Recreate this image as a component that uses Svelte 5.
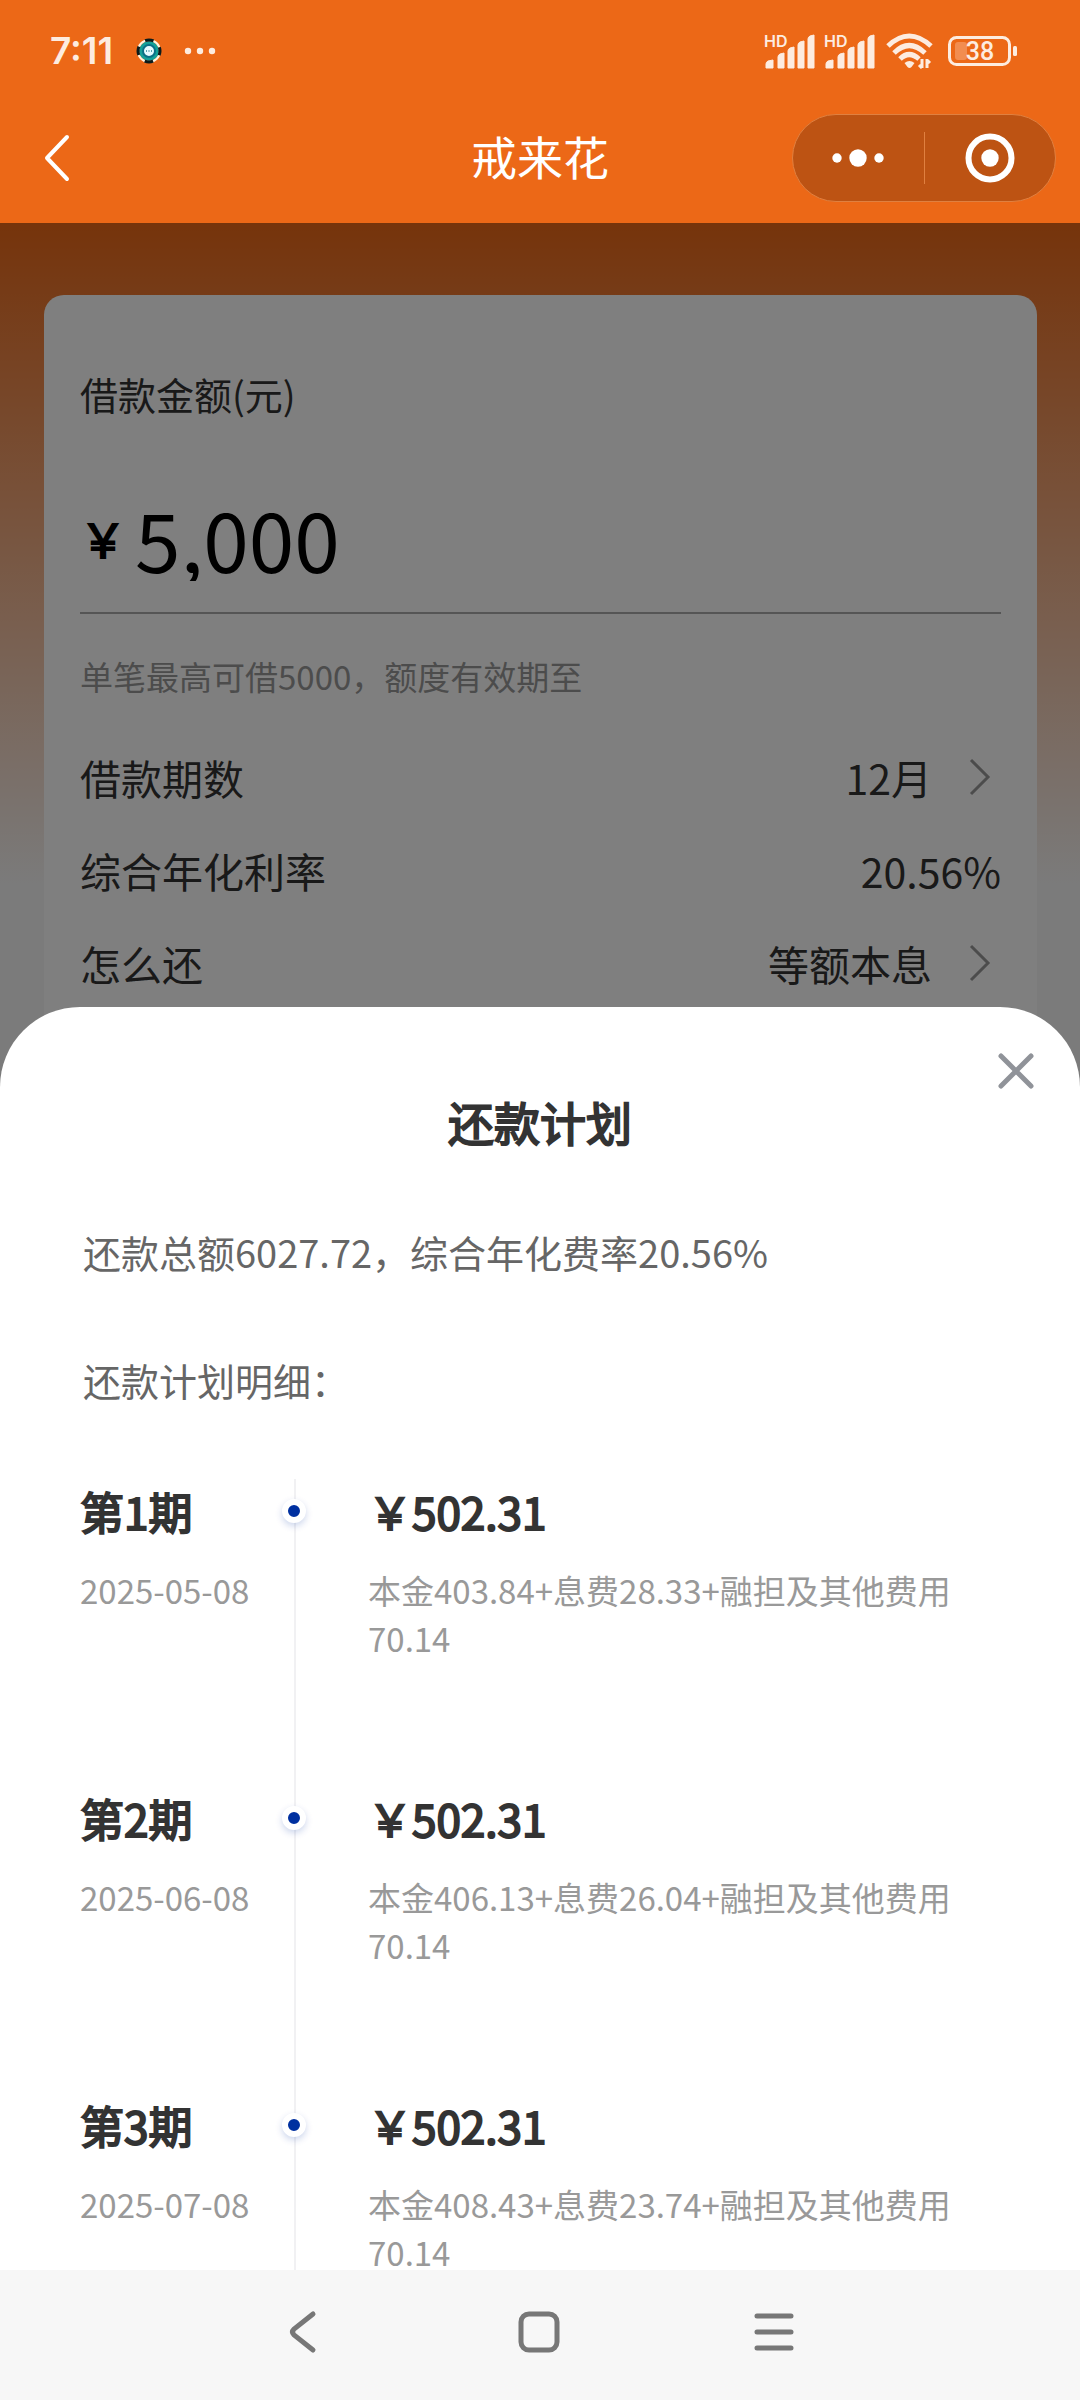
<script>
    let amount = '5,000';

    const loanRows = [
        { label: '借款期数', value: '12月', link: true },
        { label: '综合年化利率', value: '20.56%', link: false },
        { label: '怎么还', value: '等额本息', link: true }
    ];

    const plan = [
        { term: 1, date: '2025-05-08', total: '502.31', principal: '403.84', interest: '28.33', fee: '70.14' },
        { term: 2, date: '2025-06-08', total: '502.31', principal: '406.13', interest: '26.04', fee: '70.14' },
        { term: 3, date: '2025-07-08', total: '502.31', principal: '408.43', interest: '23.74', fee: '70.14' }
    ];

    let showPlan = true;
</script>

<div class="screen">
    <header>
        <div class="status">
            <span class="time">7:11</span>
            <svg class="notice" width="82" height="26" viewBox="0 0 82 26">
                <circle cx="13" cy="13" r="10" fill="#14a098" />
                <circle cx="13" cy="13" r="11" fill="none" stroke="#fff3e0" stroke-width="2" />
                <circle cx="13" cy="13" r="11" fill="none" stroke="#0b1a1a" stroke-width="3" stroke-dasharray="8.6 8.68" stroke-dashoffset="4.3" />
                <circle cx="13" cy="13" r="6" fill="#e6fbff" stroke="#0b6f86" stroke-width="2" />
                <path d="M10 13h1M12.5 13h1M15 13h1" stroke="#2b8793" stroke-width="1.5" />
                <g fill="#fdece0">
                    <circle cx="52" cy="13" r="3.2" />
                    <circle cx="64" cy="13" r="3.2" />
                    <circle cx="76" cy="13" r="3.2" />
                </g>
            </svg>
            <div class="signals">
                {#each [1, 2] as sim}
                    <svg width="52" height="42" viewBox="0 -3 52 42">
                        <text x="0" y="14" class="hd">HD</text>
                        <path d="M2 35v-4q0-2 2-3l5-1v8zM14 35V24q0-2 2-3l4-1v15zM24 35V18q0-2 2-3l4-1v21zM34 35V12q0-2 2-3l4-1v27zM44 35V6q0-2 2-3l4-1v33z" fill="#fdece0" stroke="#fdece0" stroke-width="1" stroke-linejoin="round" />
                    </svg>
                {/each}
                <svg class="wifi" width="48" height="36" viewBox="0 0 48 36">
                    <g fill="none" stroke="#fdece0" stroke-width="5">
                        <path d="M2 13Q23-7 45 13" />
                        <path d="M8 20Q23 5 39 20" />
                        <path d="M14 26Q23 17 33 26" />
                    </g>
                    <path d="M18.5 30q5-4 10 0l-3 4q-2 2-4 0z" fill="#fdece0" />
                    <path d="M36 26v9M36 35l-3-3M41 35v-9M41 27l3 3" fill="none" stroke="#fdece0" stroke-width="3" />
                </svg>
                <svg width="70" height="32" viewBox="0 0 70 32">
                    <rect x="1.5" y="2.5" width="60" height="27" rx="7" fill="none" stroke="#fdece0" stroke-width="3" />
                    <rect x="7" y="7" width="12" height="18" rx="3" fill="#f28d50" />
                    <rect x="65" y="11" width="4" height="10" rx="1.5" fill="#fdece0" />
                    <text x="32" y="25" class="level">38</text>
                </svg>
            </div>
        </div>

        <nav class="titlebar">
            <button class="back" aria-label="返回">
                <svg width="26" height="48" viewBox="0 0 26 48">
                    <path d="M23 3L3 24l20 21" fill="none" stroke="#fff" stroke-width="4" stroke-linecap="round" stroke-linejoin="round" />
                </svg>
            </button>
            <h1>戒来花</h1>
            <div class="capsule">
                <button aria-label="更多">
                    <svg width="52" height="20" viewBox="0 0 52 20" fill="#fff">
                        <circle cx="5" cy="10" r="4.7" />
                        <circle cx="26" cy="10" r="8.7" />
                        <circle cx="47" cy="10" r="4.7" />
                    </svg>
                </button>
                <i></i>
                <button aria-label="关闭小程序">
                    <svg width="50" height="50" viewBox="0 0 50 50">
                        <circle cx="25" cy="25" r="21.5" fill="none" stroke="#fff" stroke-width="6" />
                        <circle cx="25" cy="25" r="8.7" fill="#fff" />
                    </svg>
                </button>
            </div>
        </nav>
    </header>

    <main>
        <section class="card">
            <label class="amount-label" for="amount">借款金额(元)</label>
            <div class="amount">
                <span>￥</span>
                <input id="amount" type="text" bind:value={amount} />
            </div>
            <p class="hint">单笔最高可借5000，额度有效期至</p>
            {#each loanRows as row}
                <div class="row">
                    <span>{row.label}</span>
                    {#if row.link}
                        <button>
                            {row.value}
                            <svg width="22" height="38" viewBox="0 0 22 38">
                                <path d="M2 2l17 17L2 36" fill="none" stroke="#999" stroke-width="3" />
                            </svg>
                        </button>
                    {:else}
                        <span>{row.value}</span>
                    {/if}
                </div>
            {/each}
        </section>

        {#if showPlan}
            <div class="mask"></div>
            <section class="sheet" role="dialog" aria-labelledby="plan-title">
                <button class="close" aria-label="关闭" on:click={() => (showPlan = false)}>
                    <svg width="38" height="38" viewBox="0 0 38 38">
                        <path d="M4 4l30 30M34 4L4 34" stroke="#909399" stroke-width="5" stroke-linecap="round" />
                    </svg>
                </button>
                <h2 id="plan-title">还款计划</h2>
                <p class="summary">还款总额6027.72，综合年化费率20.56%</p>
                <p class="summary">还款计划明细：</p>
                <ol>
                    {#each plan as item}
                        <li>
                            <div class="term">
                                <h3>第{item.term}期</h3>
                                <time datetime={item.date}>{item.date}</time>
                            </div>
                            <div class="detail">
                                <span class="dot"></span>
                                <h3>￥{item.total}</h3>
                                <p>本金{item.principal}+息费{item.interest}+融担及其他费用{item.fee}</p>
                            </div>
                        </li>
                    {/each}
                </ol>
            </section>
        {/if}
    </main>

    <footer>
        <button aria-label="后退">
            <svg width="44" height="44" viewBox="0 0 44 44">
                <path d="M31 4L12 19q-3 3 0 6l19 15" />
            </svg>
        </button>
        <button aria-label="主屏幕">
            <svg width="44" height="44" viewBox="0 0 44 44">
                <rect x="4" y="4" width="36" height="36" rx="8" />
            </svg>
        </button>
        <button aria-label="最近任务">
            <svg width="44" height="44" viewBox="0 0 44 44">
                <path d="M5 6h34M5 22h34M5 38h34" />
            </svg>
        </button>
    </footer>
</div>

<style>
    :global(body) {
        font-family: "Noto Sans CJK SC", "Noto Sans", sans-serif;
    }

    h1, h2, h3, p, ol {
        margin: 0;
        padding: 0;
        list-style: none;
    }

    button {
        padding: 0;
        border: 0;
        background: none;
        font: inherit;
        color: inherit;
    }

    svg {
        display: block;
    }

    .screen {
        display: flex;
        flex-direction: column;
        height: 100vh;
        overflow: hidden;
    }

    header {
        background: #ec6817;
        color: #fff;
    }

    .status {
        display: flex;
        align-items: center;
        height: 102px;
        padding: 0 62px 0 50px;
    }

    .time {
        font: 600 37px/48px Inter, sans-serif;
        color: #fdece0;
    }

    .notice {
        margin-left: 23px;
    }

    .signals {
        display: flex;
        align-items: center;
        gap: 8px;
        margin-left: auto;
    }

    .hd {
        font: 600 16px Inter, sans-serif;
        fill: #fdece0;
    }

    .level {
        font: 500 25px Roboto, sans-serif;
        fill: #fdece0;
        text-anchor: middle;
    }

    .wifi {
        margin: 0 6px 0 2px;
    }

    .titlebar {
        display: grid;
        grid-template-columns: 1fr auto 1fr;
        align-items: center;
        height: 112px;
        padding: 0 24px 9px;
    }

    .titlebar h1 {
        font-size: 46px;
        font-weight: 400;
        line-height: 66px;
        padding-bottom: 6px;
    }

    .back {
        justify-self: start;
        margin-left: 20px;
    }

    .capsule {
        display: flex;
        align-items: center;
        justify-self: end;
        box-sizing: border-box;
        width: 264px;
        height: 88px;
        border: 1px solid #e08040;
        border-radius: 44px;
        background: #bd5313;
    }

    .capsule button {
        display: flex;
        flex: 1;
        justify-content: center;
    }

    .capsule i {
        width: 1px;
        height: 52px;
        background: #e08040;
    }

    main {
        position: relative;
        flex: 1;
        min-height: 0;
        overflow: hidden;
        box-sizing: border-box;
        padding: 72px 43px 0 44px;
        background: #f6f6f6 linear-gradient(#ec6817, #f6f6f6) no-repeat 0 0 / 100% 660px;
    }

    .card {
        padding: 71px 36px;
        border-radius: 20px;
        background: #fff;
        color: #333;
    }

    .amount-label {
        display: block;
        font-size: 38px;
        line-height: 56px;
    }

    .amount {
        display: flex;
        align-items: center;
        margin-top: 71px;
        padding-bottom: 31px;
        border-bottom: 2px solid #aaa;
        color: #000;
    }

    .amount span {
        font-size: 46px;
        line-height: 66px;
        -webkit-text-stroke: 2px;
    }

    .amount input {
        flex: 1;
        min-width: 0;
        height: 88px;
        margin-left: 9px;
        padding: 0;
        border: 0;
        background: none;
        font: inherit;
        font-size: 82px;
        color: inherit;
    }

    .hint {
        margin: 38px 0 30px;
        font-size: 33px;
        line-height: 48px;
        color: #999;
    }

    .row {
        display: flex;
        align-items: center;
        justify-content: space-between;
        height: 93px;
        font-size: 41px;
    }

    .row button {
        display: flex;
        align-items: center;
        gap: 37px;
        padding-right: 10px;
    }

    .mask {
        position: absolute;
        inset: 0;
        background: rgba(0, 0, 0, 0.5);
    }

    .sheet {
        position: absolute;
        inset: 784px 0 0;
        overflow: hidden;
        padding: 81px 80px 0;
        border-radius: 80px 80px 0 0;
        background: #fff;
        color: #333;
    }

    .close {
        position: absolute;
        top: 45px;
        right: 45px;
    }

    /* regular weight thickened with a stroke, so digits keep their width */
    .sheet h2,
    h3 {
        font-weight: 400;
        -webkit-text-stroke: 2px;
    }

    .sheet h2 {
        margin-bottom: 74px;
        font-size: 46px;
        line-height: 66px;
        text-align: center;
    }

    .summary {
        margin-bottom: 80px;
        padding-left: 3px;
        font-size: 38px;
        line-height: 48px;
        color: #666;
    }

    .summary + .summary {
        margin-bottom: 75px;
    }

    li {
        display: grid;
        grid-template-columns: 214px 1fr;
        height: 307px;
    }

    h3 {
        margin-bottom: 23px;
        font-size: 44px;
        line-height: 64px;
    }

    time, .detail p {
        font-size: 33px;
        line-height: 48px;
        color: #999;
    }

    .detail {
        position: relative;
        padding-left: 72px;
        border-left: 2px solid #f1f1f3;
    }

    .dot {
        position: absolute;
        top: 20px;
        left: -14px;
        width: 12px;
        height: 12px;
        border: 6px solid #fff;
        border-radius: 50%;
        background: #0030a0;
        box-shadow: 0 3px 7px rgba(0, 48, 160, 0.2);
    }

    footer {
        display: flex;
        align-items: center;
        justify-content: center;
        gap: 191px;
        box-sizing: border-box;
        height: 130px;
        padding: 0 2px 6px 0;
        background: #f7f7f7;
    }

    footer svg {
        fill: none;
        stroke: #777;
        stroke-width: 5;
        stroke-linecap: round;
    }
</style>
